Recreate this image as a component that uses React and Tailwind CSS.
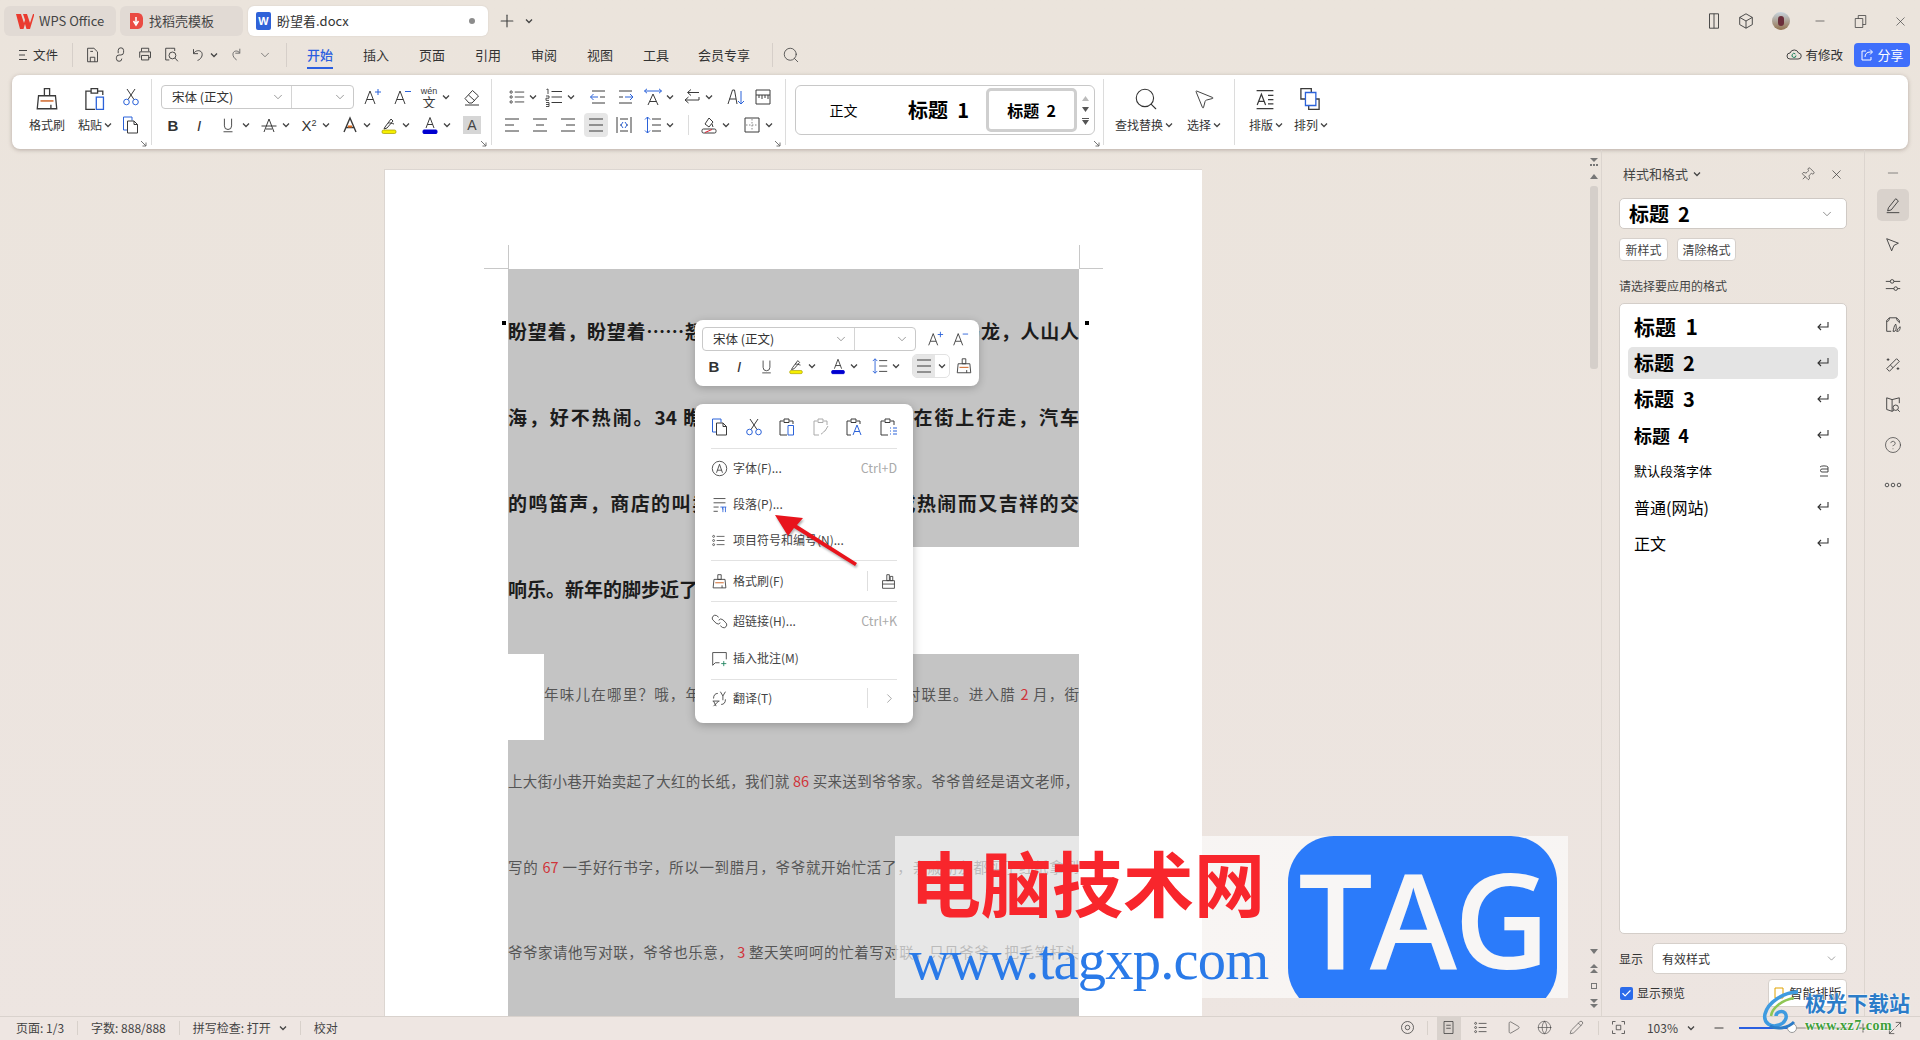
import React from "react";
import { Search, Pin, X, CircleHelp, Globe, Play, Pencil, MousePointer2, Minus, Plus, ChevronDown, ChevronRight, Check } from "lucide-react";

const BL = "#2b62d9";
const DK = "#3a3a3a";

function Ic({ s = 20, children, vb = 20, className = "" }) {
  return (
    <svg width={s} height={s} viewBox={`0 0 ${vb} ${vb}`} fill="none" stroke={DK} strokeWidth="1" className={"shrink-0 " + className}>
      {children}
    </svg>
  );
}
const Chev = () => (
  <svg width="8" height="6" viewBox="0 0 8 6" fill="none" stroke="#444" strokeWidth="1.3" className="shrink-0"><path d="M1 1.5 4 4.5 7 1.5" /></svg>
);
const Launcher = () => (
  <svg width="7" height="7" viewBox="0 0 7 7" fill="none" stroke="#666" strokeWidth="0.9"><path d="M1 1 6 6M6 2.5V6H2.5" /></svg>
);
function T({ w, children, chev, gap = "gap-[3px]" }) {
  return <div className={`${w} h-full flex items-center justify-center ${gap} shrink-0`}>{children}{chev && <Chev />}</div>;
}

const Brush = ({ s = 20 }) => (
  <Ic s={s}><path d="M8 2h4v5.5H8zM3.5 7.5h13l1 10h-15zM13 17.5v-3" /><path d="M5 11.5h10" stroke="#c8500a" /></Ic>
);
const Paste = ({ s = 20 }) => (
  <Ic s={s}><path d="M6.5 4H3v14h7M7 2h5v3.5H7zM12.5 4H16v3" /><path d="M11 8.5h5.5V18H11z" stroke={BL} /></Ic>
);
const Cut = ({ s = 20 }) => (
  <Ic s={s}><path d="M7 12.5 14 2M13 12.5 6 2" /><circle cx="5.5" cy="15" r="2.8" stroke={BL} /><circle cx="14.5" cy="15" r="2.8" stroke={BL} /></Ic>
);
const Copy = ({ s = 20 }) => (
  <Ic s={s}><path d="M6 15H2.5V2H11v3.5" stroke={BL} /><path d="M6.5 6H13l3.5 3.5V18h-10zM13 6v3.5h3.5" /></Ic>
);
const AGlyph = <path d="M3 17 8 4l5 13M4.8 12.5h6.4" />;
const AUp = ({ s = 20 }) => <Ic s={s}>{AGlyph}<path d="M16 2v6M13 5h6" stroke={BL} /></Ic>;
const ADown = ({ s = 20 }) => <Ic s={s}>{AGlyph}<path d="M13 4.5h6" stroke={BL} /></Ic>;
const Wen = () => (
  <svg width="20" height="22" viewBox="0 0 20 22" className="shrink-0"><text x="10" y="8" textAnchor="middle" fontSize="9" fill={DK} fontFamily="'Liberation Sans'">wén</text><text x="10" y="20.5" textAnchor="middle" fontSize="13" fill={DK} fontFamily="'Noto Sans CJK SC'">文</text></svg>
);
const Eraser = () => (
  <Ic><path d="M3 11.5 10.5 3.5l6 5.5-6.5 7H7zM6.5 8 13 14" /><path d="M3 18h14" /></Ic>
);
const Letter = ({ c, cls = "" }) => <span className={`text-[15px] leading-none text-[#333] font-['Liberation_Sans'] ${cls}`}>{c}</span>;
const Under = ({ s = 20 }) => <Ic s={s}><path d="M6 3v8a4 4 0 0 0 8 0V3M5 17.5h10" /></Ic>;
const Strike = () => <Ic><path d="M5 17 10 4l5 13M2.5 11h15M7 14h6" /></Ic>;
const Sup = () => <span className="text-[15px] leading-none text-[#333] font-['Liberation_Sans']">X<sup className="text-[9px]">2</sup></span>;
const AGlow = () => <Ic><path d="M4 17 10 3l6 14M6 12.5h8" strokeWidth="1.4" /><path d="M8 11.5h4" stroke="#e06a1a" strokeWidth="2" /></Ic>;
const Hi = ({ s = 20 }) => (
  <Ic s={s}><path d="M6 12 12 4l2 2-6 7-3 1z" /><path d="M9 8c2-.5 4 .5 6 1" /><rect x="3" y="15" width="14" height="3.5" rx="1.5" fill="#f6ef00" stroke="#a59a00" strokeWidth="0.7" /></Ic>
);
const ColorA = ({ s = 20 }) => (
  <Ic s={s}><path d="M6 13 10 2.5 14 13M7.2 9.5h5.6" /><rect x="3" y="15" width="14" height="3.5" rx="1" fill="#0000d0" stroke="#0000d0" /></Ic>
);
const Lines = ({ d }) => <path d={d} />;
const Bullets = ({ s = 20 }) => (
  <Ic s={s}><circle cx="3.5" cy="4.5" r="1.3" /><circle cx="3.5" cy="10" r="1.3" /><circle cx="3.5" cy="15.5" r="1.3" /><Lines d="M7.5 4.5H18M7.5 10H18M7.5 15.5H18" /></Ic>
);
const Numbers = () => (
  <Ic><path d="M2.5 2.5 4 2v5M2 9h3v2.2H2v2.2h3M2 15.5h3v4H2M2 17.5h3" strokeWidth="0.9" /><Lines d="M7.5 4.5H18M7.5 10H18M7.5 15.5H18" /></Ic>
);
const Dedent = () => <Ic><Lines d="M4 4h13M12 10h5M4 16h13" /><path d="M10 10H2.5M5.5 7l-3 3 3 3" stroke={BL} /></Ic>;
const Indent = () => <Ic><Lines d="M3 4h13M3 10h4M3 16h13" /><path d="M9 10h8M14 7l3 3-3 3" stroke={BL} /></Ic>;
const Dir = () => <Ic><path d="M5 18 10 7l5 11M6.8 14.5h6.4" /><path d="M1.5 4h17M4 1.8 1.5 4 4 6.2M16 1.8 18.5 4 16 6.2" stroke={BL} /></Ic>;
const Swap = () => <Ic><path d="M17 5.5H6M9 2.5 5.5 5.5 9 8.5M3 13h14v-3M3 13l3.5 3M3 13l3.5-3" /></Ic>;
const Sort = () => <Ic><path d="M2 17 6.5 3h2L11 17M3.5 12h6.5" /><path d="M15 4v13M12 14l3 3 3-3" stroke={BL} /></Ic>;
const Ruler = () => <Ic><path d="M3 3h14M3 17h14M3 3v14M17 3v14M3 8h14M6 8v3M9 8v4M12 8v3M15 8v4" /></Ic>;
const Al = ({ d }) => <Ic><path d={d} /></Ic>;
const LineSp = ({ s = 20 }) => (
  <Ic s={s}><Lines d="M9 4h9M9 10h9M9 16h9" /><path d="M4.5 2v16M2 4.5 4.5 2 7 4.5M2 15.5 4.5 18 7 15.5" stroke={BL} /></Ic>
);
const Distrib = () => <Ic><path d="M3 2v16M17 2v16M6 4h8M6 16h8M6 10h1.5M12.5 10H14" /><path d="M9 7 7 10l2 3M11 7l2 3-2 3" stroke={BL} /></Ic>;
const Shade = () => <Ic><path d="M6 9 10 3l4 4-4 5zM13 9l1 3" /><rect x="3" y="14" width="14" height="4" rx="1.5" /><path d="M6 17.5 13 14.5" stroke="#d23" /></Ic>;
const Border = () => <Ic><path d="M3 3h14v14H3z" /><path d="M10 4v12M4 10h12" strokeDasharray="1.5 1.5" stroke="#888" /></Ic>;
const Save = () => <Ic s={18}><path d="M4 2.5h7l4 4v11H4zM7 17.5v-5h5v5M7 6h3" /></Ic>;
const Link2 = () => <Ic s={18}><path d="M8 8V5a3 3 0 0 1 6 0v2a3 3 0 0 1-3 3H9a3 3 0 0 0-3 3v1a3 3 0 0 0 6 0" /></Ic>;
const Printer = () => <Ic s={18}><path d="M5 6V2.5h8V6M3 13V6.5h12V13h-2M5 10.5h8v5H5z" /></Ic>;
const Preview = () => <Ic s={18}><path d="M8 2.5H3v13h4M8 2.5h5v3" /><circle cx="10.5" cy="10.5" r="3.8" /><path d="m13.5 13.5 3 3.5" /></Ic>;
const Undo = () => <Ic s={18}><path d="M5 3.5v5h5M5.2 8.2C7 5 12 4 14 7c2 3.5-1 8-4.5 9" /></Ic>;
const Redo = () => <Ic s={18}><path d="M12 3v5H7" stroke="#666" /><path d="M12 8C10 4.500 5.500 5 4.500 8c-.8 3 1.500 6 4 7.500" stroke="#666" /></Ic>;

function Label({ children, chev }) {
  return <div className="h-full flex items-center justify-center gap-[2px] text-[12px] text-[#333] whitespace-nowrap">{children}{chev && <Chev />}</div>;
}
function Combo({ name, className, split }) {
  return (
    <div className={`flex border border-[#c9c9c9] rounded-[4px] bg-white h-[24px] shrink-0 ${className}`}>
      <div className={`${split} flex items-center justify-between pl-[10px] pr-[6px] border-r border-[#d4d4d4] text-[12.5px] text-[#333]`}>
        <span>{name}</span><ChevronDown size={14} strokeWidth={1} color="#555" />
      </div>
      <div className="flex-1 flex items-center justify-end pr-[6px]"><ChevronDown size={14} strokeWidth={1} color="#555" /></div>
    </div>
  );
}
function Sep() { return <div className="w-px self-stretch my-[0px] bg-[#dcdcdc] shrink-0" />; }

function BigCol({ w, icon, label, iconCls = "" }) {
  return (
    <div className={`${w} flex flex-col shrink-0`}>
      <div className={`h-[28px] mt-[6px] flex items-center justify-center ${iconCls}`}>{icon}</div>
      <div className="h-[24px]"><Label chev={label.chev}>{label.t}</Label></div>
    </div>
  );
}

function Ribbon() {
  return (
    <div className="mx-[12px] h-[74px] bg-white rounded-[8px] shadow-[0_1px_4px_rgba(90,70,60,0.35)] flex pt-[4px] pb-[4px] shrink-0">
      {/* clipboard */}
      <div className="w-[139px] relative flex pl-[12px] shrink-0">
        <BigCol w="w-[46px]" icon={<Brush s={26} />} label={{ t: "格式刷" }} />
        <BigCol w="w-[50px]" icon={<Paste s={26} />} label={{ t: "粘贴", chev: true }} />
        <div className="w-[22px] flex flex-col pt-[6px]">
          <div className="h-[24px] flex items-center justify-center"><Cut /></div>
          <div className="h-[24px] mt-[4px] flex items-center justify-center"><Copy /></div>
        </div>
        <div className="absolute right-[4px] bottom-[-2px]"><Launcher /></div>
      </div>
      <Sep />
      {/* font */}
      <div className="w-[339px] relative pt-[6px] pl-[9px] shrink-0">
        <div className="h-[24px] flex">
          <Combo name="宋体 (正文)" className="w-[193px]" split="w-[130px]" />
          <T w="w-[33px] ml-[1px]"><AUp /></T>
          <T w="w-[27px]"><ADown /></T>
          <T w="w-[39px]" chev><Wen /></T>
          <T w="w-[35px]"><Eraser /></T>
        </div>
        <div className="h-[24px] mt-[4px] flex">
          <T w="w-[24px]"><Letter c="B" cls="font-bold" /></T>
          <T w="w-[28px]"><Letter c="I" cls="italic" /></T>
          <T w="w-[42px]" chev gap="gap-[5px]"><Under s={18} /></T>
          <T w="w-[39px]" chev><Strike /></T>
          <T w="w-[43px]" chev gap="gap-[5px]"><Sup /></T>
          <T w="w-[37px]" chev><AGlow /></T>
          <T w="w-[41px]" chev><Hi /></T>
          <T w="w-[40px]" chev><ColorA /></T>
          <div className="ml-[8px] w-[18px] h-[18px] mt-[3px] bg-[#d6d6d6] flex items-center justify-center text-[14px] text-[#444] font-['Liberation_Sans']">A</div>
        </div>
        <div className="absolute right-[4px] bottom-[-2px]"><Launcher /></div>
      </div>
      <Sep />
      {/* paragraph */}
      <div className="w-[293px] relative pt-[6px] shrink-0">
        <div className="h-[24px] flex pl-[12px]">
          <T w="w-[37px]" chev><Bullets s={18} /></T>
          <T w="w-[37px]" chev><Numbers /></T>
          <T w="w-[28px] ml-[6px]"><Dedent /></T>
          <T w="w-[28px]"><Indent /></T>
          <T w="w-[37px]" chev><Dir /></T>
          <T w="w-[40px]" chev><Swap /></T>
          <T w="w-[27px] ml-[5px]"><Sort /></T>
          <T w="w-[27px]"><Ruler /></T>
        </div>
        <div className="h-[24px] mt-[4px] flex pl-[6px]">
          <T w="w-[28px]"><Al d="M3 4h14M3 10h9M3 16h14" /></T>
          <T w="w-[28px]"><Al d="M3 4h14M6 10h8M3 16h14" /></T>
          <T w="w-[28px]"><Al d="M3 4h14M8 10h9M3 16h14" /></T>
          <T w="w-[28px]"><div className="w-[24px] h-[24px] rounded-[4px] bg-[#e6e6e6] flex items-center justify-center"><Al d="M3 4h14M3 10h14M3 16h14" /></div></T>
          <T w="w-[28px]"><Distrib /></T>
          <T w="w-[40px]" chev><LineSp /></T>
          <div className="w-px h-[20px] mt-[2px] ml-[10px] bg-[#dcdcdc]" />
          <T w="w-[43px] ml-[4px]" chev><Shade /></T>
          <T w="w-[42px]" chev><Border /></T>
        </div>
        <div className="absolute right-[4px] bottom-[-2px]"><Launcher /></div>
      </div>
      <Sep />
      {/* styles */}
      <div className="w-[317px] relative pl-[9px] pt-[6px] shrink-0">
        <div className="w-[300px] h-[50px] border border-[#c8c8c8] rounded-[6px] flex items-center text-black">
          <div className="w-[95px] text-center text-[14px]">正文</div>
          <div className="w-[95px] text-center text-[20px] font-bold whitespace-pre">标题  1</div>
          <div className="w-[91px] h-[44px] border-[3px] border-[#cfcfcf] rounded-[5px] flex items-center justify-center text-[16px] font-bold whitespace-pre">标题  2</div>
          <div className="flex-1 flex flex-col items-center gap-[6px] text-[#777]">
            <svg width="7" height="5" viewBox="0 0 7 5" fill="#bbb"><path d="M3.5 0 7 5H0z" /></svg>
            <svg width="7" height="5" viewBox="0 0 7 5" fill="#555"><path d="M0 0h7L3.5 5z" /></svg>
            <svg width="7" height="7" viewBox="0 0 7 7" fill="#555"><path d="M0 0h7v1H0zM0 2h7L3.5 7z" /></svg>
          </div>
        </div>
        <div className="absolute right-[3px] bottom-[-2px]"><Launcher /></div>
      </div>
      <Sep />
      {/* find */}
      <div className="w-[130px] flex shrink-0">
        <BigCol w="w-[80px]" iconCls="pl-[4px]" icon={<Search size={26} strokeWidth={1} color="#333" />} label={{ t: "查找替换", chev: true }} />
        <BigCol w="w-[40px]" icon={<MousePointer2 size={24} strokeWidth={1} color="#444" />} label={{ t: "选择", chev: true }} />
      </div>
      <Sep />
      <div className="flex pl-[9px]">
        <BigCol w="w-[44px]" iconCls="pr-[2px]" icon={<Ic s={24}><path d="M3 3h14M3 18h14" /><path d="M3.5 15 7 6l3.500 9M4.800 12h4.500M12.500 7H17M12.500 10.500H17M12.500 14H17" /></Ic>} label={{ t: "排版", chev: true }} />
        <BigCol w="w-[46px]" iconCls="pr-[2px]" icon={<Ic s={26}><path d="M3 2h8v8H3zM9 10h8v8H9z" /><path d="M6.500 5h8v10h-8z" fill="#fff" stroke={BL} /></Ic>} label={{ t: "排列", chev: true }} />
      </div>
    </div>
  );
}

function TabBar() {
  return (
    <div className="h-[36px] pt-[6px] pl-[4px] flex items-stretch shrink-0">
      <div className="w-[112px] bg-[#e1dad4] rounded-[6px] flex items-center pl-[12px] gap-[5px] text-[13px] text-[#444]">
        <svg width="18" height="15" viewBox="0 0 18 15"><path d="M0 0h5l3 9 1-3-2-6h4l3 9 3-9h1.500l-4.500 15h-3.500L9 10l-1.500 5H4z" fill="#ea3b2f" /></svg>
        <span>WPS Office</span>
      </div>
      <div className="w-[123px] ml-[4px] bg-[#e1dad4] rounded-[6px] flex items-center pl-[9px] gap-[5px] text-[13px] text-[#444]">
        <svg width="15" height="18" viewBox="0 0 15 18"><path d="M1 1h8a6 6 0 0 1 5 5v6a6 6 0 0 1-5 5H1z" fill="#ea4b43" /><path d="M7 5v6M4.500 9 7 13l2.500-4" stroke="#fff" strokeWidth="1.500" fill="none" /></svg>
        <span>找稻壳模板</span>
      </div>
      <div className="w-[240px] ml-[5px] bg-white rounded-[6px] flex items-center pl-[8px] pr-[13px] gap-[6px] text-[13px] text-[#333] shadow-[0_0_2px_rgba(0,0,0,0.1)]">
        <div className="w-[15px] h-[18px] rounded-[2px] bg-[#2f62d8] text-white text-[11px] font-bold flex items-center justify-center font-['Liberation_Sans']">W</div>
        <span className="flex-1">盼望着.docx</span>
        <div className="w-[6px] h-[6px] rounded-full bg-[#8c8c8c]" />
      </div>
      <div className="ml-[9px] flex items-center gap-[8px]">
        <Plus size={20} strokeWidth={1.4} color="#444" /><Chev />
      </div>
      <div className="ml-auto flex items-center">
        <div className="w-[30px] flex justify-center pr-[2px]"><Ic s={18}><path d="M5 2h10v16H5zM10 2v16" /></Ic></div>
        <div className="w-[32px] flex justify-center"><Ic s={18}><path d="M10 2 17 6v8l-7 4-7-4V6zM3 6l7 4 7-4M10 10v8" /></Ic></div>
        <div className="w-[38px] flex justify-center"><div className="w-[18px] h-[18px] rounded-full bg-gradient-to-b from-[#c7d4de] to-[#93734f] flex items-center justify-center"><div className="w-[6px] h-[10px] rounded-full bg-[#6b2e3a]" /></div></div>
        <div className="w-[40px] flex justify-center"><Minus size={14} strokeWidth={1.2} color="#444" /></div>
        <div className="w-[40px] flex justify-center"><Ic s={15}><path d="M3 6h10v12H3zM7 6V2h10v12h-4" /></Ic></div>
        <div className="w-[40px] flex justify-center"><X size={15} strokeWidth={1.1} color="#444" /></div>
      </div>
    </div>
  );
}

function MenuBar() {
  const tabs = [["插入", "w-[56px]"], ["页面", "w-[56px]"], ["引用", "w-[56px]"], ["审阅", "w-[56px]"], ["视图", "w-[56px]"], ["工具", "w-[56px]"]];
  return (
    <div className="h-[39px] flex items-center text-[13px] text-[#333] shrink-0 pb-[1px]">
      <div className="w-[72px] flex items-center pl-[18px] gap-[5px] text-[12.5px]">
        <svg width="10" height="12" viewBox="0 0 10 12" stroke="#444" fill="none"><path d="M1 1.500h8M1 6h6M1 10.500h8" /></svg>
        <span>文件</span>
      </div>
      <div className="w-px h-[24px] bg-[#d6cfc9]" />
      <div className="flex items-center w-[213px] h-full">
        <T w="w-[28px] ml-[6px]"><Save /></T>
        <T w="w-[26px]"><Link2 /></T>
        <T w="w-[25px]"><Printer /></T>
        <T w="w-[27px]"><Preview /></T>
        <T w="w-[37px]" chev><Undo /></T>
        <T w="w-[32px]"><Redo /></T>
        <T w="w-[22px]"><ChevronDown size={14} strokeWidth={1.2} color="#555" /></T>
      </div>
      <div className="w-px h-[24px] bg-[#d6cfc9]" />
      <div className="w-[20px]" />
      <div className="w-[26px] h-full relative flex items-center justify-center text-[#2b5fe0] font-medium whitespace-nowrap">
        开始
        <div className="absolute bottom-[5px] left-0 right-0 h-[2px] bg-[#2b5fe0]" />
      </div>
      <div className="w-[15px]" />
      {tabs.map(([t, w]) => <div key={t} className={`${w} text-center`}>{t}</div>)}
      <div className="w-[80px] text-center whitespace-nowrap">会员专享</div>
      <div className="w-[8px]" />
      <div className="w-px h-[24px] bg-[#d6cfc9]" />
      <div className="w-[36px] flex justify-center"><Search size={18} strokeWidth={1.1} color="#444" /></div>
      <div className="ml-auto flex items-center mr-[10px]">
        <svg width="16" height="16" viewBox="0 0 16 16" fill="none" stroke="#444" strokeWidth="1"><path d="M4 12a3 3 0 0 1 0-6 4.500 4.500 0 0 1 8.500 0A3 3 0 0 1 12 12z" /><path d="M10 8.500a2 2 0 1 1-.6-1.500" stroke="#17805a" /></svg>
        <span className="ml-[3px] text-[12.500px]">有修改</span>
        <div className="ml-[11px] w-[56px] h-[24px] bg-[#3f6ffb] rounded-[4px] flex items-center justify-center gap-[3px] text-white text-[13px]">
          <svg width="14" height="14" viewBox="0 0 14 14" fill="none" stroke="#fff" strokeWidth="1"><path d="M6 3H2v9h9V9M5 9c0-3 2-5 5-5h2M10 1.500 12.500 4 10 6.500" /></svg>
          分享
        </div>
      </div>
    </div>
  );
}

const Red = ({ children }) => <span className="text-[#d0343a]"> {children} </span>;

function Doc() {
  const h = "font-bold text-[19px] text-[#1c1c1c] whitespace-nowrap pb-[2px]";
  const j = "text-justify [text-align-last:justify]";
  const b = "text-[14.500px] text-[#555] pb-[4px]";
  return (
    <div className="flex-1 relative overflow-hidden min-w-0">
      <div className="ml-[384px] mt-[19px] w-[818px] h-[900px] bg-white border-l border-t border-[#dcd6d1] relative pt-[99px] pl-[123px]">
        <div className="absolute left-[99px] top-[98px] w-[24px] h-px bg-[#c8c8c8]" />
        <div className="absolute left-[694px] top-[98px] w-[24px] h-px bg-[#c8c8c8]" />
        <div className="absolute left-[123px] top-[75px] w-px h-[24px] bg-[#c8c8c8]" />
        <div className="absolute left-[694px] top-[75px] w-px h-[24px] bg-[#c8c8c8]" />
        <div className="absolute left-[117px] top-[151px] w-[4px] h-[4px] bg-black" />
        <div className="absolute left-[700px] top-[151px] w-[4px] h-[4px] bg-black" />
        <div className="w-[571px] bg-[#c4c4c4] pt-[20px]">
          <div className={`h-[86px] flex items-center ${h}`}><div className={`w-full ${j}`}>盼望着，盼望着……翘首以盼的新年到了，街上车水马龙，人山人</div></div>
          <div className={`h-[86px] flex items-center ${h}`}><div className={`w-full ${j}`}>海，好不热闹。34 瞧，街上到处都是人，人在街上行走，汽车</div></div>
          <div className={`h-[86px] flex items-center ${h}`}><div className={`w-full ${j}`}>的鸣笛声，商店的叫卖声，交织在一起，汇成热闹而又吉祥的交</div></div>
        </div>
        <div className="w-[260px] h-[107px] bg-[#c4c4c4]">
          <div className={`h-[86px] flex items-center ${h}`}>响乐。新年的脚步近了！</div>
        </div>
        <div className="w-[571px] h-[86px] flex">
          <div className="w-[36px] bg-white shrink-0" />
          <div className={`flex-1 bg-[#c4c4c4] pb-[6px] flex items-center text-[14.500px] text-[#555] whitespace-nowrap`}><div className={`w-full ${j}`}>年味儿在哪里？哦，年味儿就藏在那家家户户红红的对联里。进入腊<Red>2</Red>月，街</div></div>
        </div>
        <div className="w-[571px] bg-[#c4c4c4] pb-[200px]">
          <div className={`h-[86px] flex items-center ${b} whitespace-nowrap`}><div className={`w-full ${j}`}>上大街小巷开始卖起了大红的长纸，我们就<Red>86</Red>买来送到爷爷家。爷爷曾经是语文老师，</div></div>
          <div className={`h-[86px] flex items-center ${b} whitespace-nowrap`}><div className={`w-full ${j}`}>写的<Red>67</Red>一手好行书字，所以一到腊月，爷爷就开始忙活了，亲戚朋友都买了红纸拿到</div></div>
          <div className={`h-[84px] flex items-center ${b} whitespace-nowrap`}><div className={`w-full ${j}`}>爷爷家请他写对联，爷爷也乐意，<Red>3</Red>整天笑呵呵的忙着写对联，只见爷爷，把毛笔杆头</div></div>
        </div>
      </div>
    </div>
  );
}

function ScrollCol() {
  const Tri = ({ up, c = "#777" }) => <svg width="8" height="5" viewBox="0 0 8 5" fill={c}><path d={up ? "M4 0 8 5H0z" : "M0 0h8L4 5z"} /></svg>;
  return (
    <div className="w-[12px] border-r border-[#dcd5cf] flex flex-col items-center pt-[8px] pb-[8px] shrink-0 pr-[3px]">
      <svg width="8" height="8" viewBox="0 0 8 8" fill="#777"><path d="M0 0h8L4 4zM0 6h2v2H0zM3 6h2v2H3zM6 6h2v2H6z" /></svg>
      <div className="mt-[8px]"><Tri up /></div>
      <div className="mt-[7px] w-[8px] h-[183px] rounded-[3px] bg-[#d5cfca]" />
      <div className="mt-auto flex flex-col items-center gap-[10px]">
        <Tri /><svg width="8" height="9" viewBox="0 0 8 9" fill="#777"><path d="M4 0 8 4H0zM4 5 8 9H0z" /></svg>
        <div className="w-[6px] h-[6px] border border-[#777]" />
        <svg width="8" height="9" viewBox="0 0 8 9" fill="#777"><path d="M0 0h8L4 4zM0 5h8L4 9z" /></svg>
      </div>
    </div>
  );
}

const Ret = ({ s }) => (
  <svg width="12" height="10" viewBox="0 0 12 10" fill="none" stroke="#333" strokeWidth="1.100" className="shrink-0"><path d="M11 0v5H1M4 2 1 5l3 3" /></svg>
);
function StyleRow({ cls, t, active, icon }) {
  return (
    <div className="h-[36px] flex items-center py-[2px]">
      <div className={`flex-1 h-[32px] rounded-[5px] flex items-center justify-between pl-[6px] pr-[9px] ${active ? "bg-[#e4e4e4]" : ""}`}>
        <span className={`text-black whitespace-pre ${cls}`}>{t}</span>
        {icon || <Ret />}
      </div>
    </div>
  );
}

function Panel() {
  return (
    <div className="w-[262px] flex flex-col px-[17px] shrink-0 relative">
      <div className="h-[48px] flex items-center pl-[4px] pr-[3px] text-[13px] text-[#444]">
        <span>样式和格式</span>
        <span className="ml-[5px]"><Chev /></span>
        <div className="ml-auto flex items-center gap-[14px]">
          <Pin size={15} strokeWidth={1} color="#333" className="rotate-45" />
          <X size={15} strokeWidth={1.1} color="#333" />
        </div>
      </div>
      <div className="h-[31px] bg-white border border-[#cfc9c4] rounded-[5px] flex items-center justify-between pl-[9px] pr-[12px]">
        <span className="text-[20px] font-bold text-black whitespace-pre">标题  2</span>
        <ChevronDown size={14} strokeWidth={1.1} color="#555" />
      </div>
      <div className="flex gap-[9px] mt-[9px] text-[12px] text-[#444]">
        <div className="w-[49px] h-[23px] bg-white border border-[#d6d0cb] rounded-[4px] flex items-center justify-center">新样式</div>
        <div className="w-[59px] h-[23px] bg-white border border-[#d6d0cb] rounded-[4px] flex items-center justify-center">清除格式</div>
      </div>
      <div className="h-[42px] flex items-center text-[12px] text-[#444] pt-[12px] pb-[4px]">请选择要应用的格式</div>
      <div className="h-[631px] bg-white border border-[#d4cec9] rounded-[5px] pt-[5px] px-[8px] shrink-0">
        <StyleRow cls="text-[21px] font-bold" t="标题  1" />
        <StyleRow cls="text-[20px] font-bold" t="标题  2" active />
        <StyleRow cls="text-[20px] font-bold" t="标题  3" />
        <StyleRow cls="text-[18px] font-bold" t="标题  4" />
        <StyleRow cls="text-[13px]" t="默认段落字体" icon={
          <svg width="10" height="13" viewBox="0 0 10 13" fill="none" stroke="#333" strokeWidth="0.900"><path d="M1 2c1-1.500 7-1.500 8 0v5H3a1.500 1.500 0 0 1 0-3h6M1 11h8" /></svg>
        } />
        <StyleRow cls="text-[16px]" t="普通(网站)" />
        <StyleRow cls="text-[16px]" t="正文" />
      </div>
      <div className="mt-[9px] h-[31px] flex items-center gap-[9px] text-[12px] text-[#333] shrink-0">
        <span>显示</span>
        <div className="flex-1 h-[31px] bg-white border border-[#d6d0cb] rounded-[5px] flex items-center justify-between pl-[9px] pr-[8px]">
          <span>有效样式</span><ChevronDown size={13} strokeWidth={1} color="#555" />
        </div>
      </div>
      <div className="mt-[4px] h-[30px] flex items-center text-[12px] text-[#333] shrink-0">
        <div className="w-[13px] h-[13px] ml-[1px] rounded-[2px] bg-[#2b6bea] flex items-center justify-center"><Check size={11} strokeWidth={2.500} color="#fff" /></div>
        <span className="ml-[4px]">显示预览</span>
        <div className="ml-auto w-[79px] h-[28px] bg-white border border-[#d6d0cb] rounded-[4px] flex items-center justify-center gap-[2px] text-[13px]">
          <svg width="14" height="14" viewBox="0 0 14 14" fill="#fff" stroke="#e0a200"><path d="M2 2h8v10H2z" /></svg>
          智能排版
        </div>
      </div>
    </div>
  );
}

function SideBar() {
  const Cell = ({ children, active, cls = "my-[4px]" }) => (
    <div className={`w-[32px] h-[32px] rounded-[5px] flex items-center justify-center ${cls} ${active ? "bg-[#d9d2cc]" : ""}`}>{children}</div>
  );
  return (
    <div className="w-[56px] shrink-0 border-l border-[#dcd5cf] flex flex-col items-center pt-[4px]">
      <Cell cls="mt-[3px] mb-[-4px]"><Minus size={16} strokeWidth={1} color="#555" /></Cell>
      <Cell active><Ic s={18}><path d="M5 13 13 3l3 2.500-8 10-4 1zM3 18.500h14" /></Ic></Cell>
      <Cell><Ic s={18}><path d="M3 3l13 5-5 2.500-2.500 6z" /></Ic></Cell>
      <Cell><Ic s={18}><path d="M2 6h5M11 6h7M2 14h9M15 14h3" /><circle cx="9" cy="6" r="2" /><circle cx="13" cy="14" r="2" /></Ic></Cell>
      <Cell><Ic s={18}><path d="M8 17H3V5l3-3h8l3 3v3M6 2c0 3-1 4-3 4M14 2c0 3 1 4 3 4" /><path d="M10 17c1-3 1-6 3-8 1 3 1 6-1 8zM14 17c1-2 2-4 4-5 0 3-1 4-2 5z" /></Ic></Cell>
      <Cell><Ic s={18}><path d="M3 14 14 3l3 3L6 17zM7 10l3 3" /><path d="M3 4l3 0M4.500 2.500v3M14 14h3M15.500 12.500v3" /></Ic></Cell>
      <Cell><Ic s={18}><path d="M9 4 3 2v13l6 2 2-1M9 4l8-2v6M9 4v13" /><circle cx="13" cy="13" r="3" /><path d="m15.200 15.200 2.300 2.300" /></Ic></Cell>
      <Cell><CircleHelp size={18} strokeWidth={1} color="#444" /></Cell>
      <Cell>
        <svg width="18" height="6" viewBox="0 0 18 6" fill="none" stroke="#555"><circle cx="3" cy="3" r="1.800" /><circle cx="9" cy="3" r="1.800" /><circle cx="15" cy="3" r="1.800" /></svg>
      </Cell>
    </div>
  );
}

function StatusBar() {
  const S = () => <div className="w-px h-[14px] bg-[#d8d1cb] mx-[13px]" />;
  return (
    <div className="h-[24px] border-t border-[#d9d2cd] bg-[#eee6e2] flex items-center text-[12px] text-[#444] pl-[16px] pb-[2px] shrink-0">
      <span>页面: 1/3</span><S /><span>字数: 888/888</span><S /><span>拼写检查: 打开</span><span className="ml-[8px]"><Chev /></span><S /><span>校对</span>
      <div className="ml-auto flex items-center h-full">
        <T w="w-[20px]"><Ic s={15}><circle cx="10" cy="10" r="8" /><circle cx="10" cy="10" r="3" /></Ic></T>
        <div className="w-px h-[14px] bg-[#d8d1cb] mx-[9px]" />
        <div className="w-[24px] h-[23px] mb-[-2px] bg-[#d9d2cd] flex items-center justify-center pb-[2px]"><Ic s={15}><path d="M4 2h12v16H4zM7 7h6M7 11h6" /></Ic></div>
        <T w="w-[40px]"><Bullets s={15} /></T>
        <T w="w-[26px]"><Play size={15} strokeWidth={1} color="#444" /></T>
        <T w="w-[36px]"><Globe size={15} strokeWidth={1} color="#444" /></T>
        <T w="w-[28px]"><Pencil size={15} strokeWidth={1} color="#444" /></T>
        <div className="w-px h-[14px] bg-[#d8d1cb] ml-[7px] mr-[9px]" />
        <T w="w-[22px]"><Ic s={15}><path d="M2 6V2h4M14 2h4v4M18 14v4h-4M6 18H2v-4M7 7h6v6H7z" /></Ic></T>
        <span className="ml-[17px]">103%</span>
        <span className="ml-[9px]"><Chev /></span>
        <div className="ml-[17px]"><Minus size={14} strokeWidth={1.600} color="#333" /></div>
        <div className="ml-[13px] w-[110px] h-[2px] bg-[#bdb7b2] relative">
          <div className="w-[54px] h-[2px] bg-[#2a5fe0]" />
          <div className="absolute left-[48px] top-[-4px] w-[10px] h-[10px] rounded-full bg-white border border-[#999]" />
        </div>
        <div className="ml-[7px]"><Plus size={14} strokeWidth={1.300} color="#333" /></div>
        <T w="w-[50px]"><Ic s={14}><path d="M11 2h7v7M2 11v7h7M18 2 11 9M2 18l7-7" /></Ic></T>
      </div>
    </div>
  );
}

function FloatBar() {
  const Tx = ({ c, cls }) => <span className={`text-[15px] leading-none text-[#333] font-['Liberation_Sans'] ${cls}`}>{c}</span>;
  return (
    <div className="absolute left-[695px] top-[320px] w-[284px] h-[66px] bg-white rounded-[8px] shadow-[0_2px_8px_rgba(0,0,0,0.22)] pl-[7px] pt-[7px] z-10">
      <div className="flex h-[24px]">
        <Combo name="宋体 (正文)" className="w-[214px]" split="w-[152px]" />
        <T w="w-[24px] ml-[7px]"><AUp s={18} /></T>
        <T w="w-[26px]"><ADown s={18} /></T>
      </div>
      <div className="flex h-[24px] mt-[3px]">
        <T w="w-[24px]"><Tx c="B" cls="font-bold" /></T>
        <T w="w-[26px]"><Tx c="I" cls="italic" /></T>
        <T w="w-[28px]"><Under s={17} /></T>
        <T w="w-[42px]" chev><Hi s={18} /></T>
        <T w="w-[42px]" chev><ColorA s={18} /></T>
        <T w="w-[42px]" chev><LineSp s={18} /></T>
        <div className="ml-[6px] w-[38px] h-[24px] border border-[#e2e2e2] rounded-[5px] flex overflow-hidden">
          <div className="w-[22px] bg-[#e6e6e6] flex items-center justify-center"><Al d="M3 4h14M3 10h14M3 16h14" /></div>
          <div className="flex-1 flex items-center justify-center"><Chev /></div>
        </div>
        <T w="w-[28px]"><Brush s={18} /></T>
      </div>
    </div>
  );
}

function MRow({ icon, t, key2, cls = "", vsep }) {
  return (
    <div className={`h-[36px] flex items-center text-[12px] text-[#444] ${cls}`}>
      <div className="w-[22px] flex justify-start">{icon}</div>
      <span className="flex-1 whitespace-nowrap">{t}</span>
      {key2 && <span className="text-[#aaa] text-[12.500px]">{key2}</span>}
      {vsep && <><div className="w-px h-[20px] bg-[#dedede]" /><div className="w-[29px] flex justify-end">{vsep}</div></>}
    </div>
  );
}
const Hr = () => <div className="h-px bg-[#e2e2e2]" />;

function ContextMenu() {
  return (
    <div className="absolute left-[695px] top-[404px] w-[218px] h-[319px] bg-white rounded-[8px] shadow-[0_2px_10px_rgba(0,0,0,0.25)] px-[16px] z-10">
      <div className="h-[44px] flex items-center justify-between pt-[2px] -mx-[1px]">
        <Copy s={20} /><Cut s={20} /><Paste s={20} />
        <Ic s={20}><g stroke="#aaa"><path d="M6.500 4H3v14h5M7 2h5v3.500H7zM12.500 4H16v4" /><path d="M10 17c2 0 2-3 4-3l3-5" /></g></Ic>
        <Ic s={20}><path d="M6.500 4H3v14h4M7 2h5v3.500H7zM12.500 4H16v3" /><path d="M9 18 13 8l4 10M10.500 14.500h5" stroke={BL} /></Ic>
        <Ic s={20}><path d="M6.500 4H3v14h7M7 2h5v3.500H7zM12.500 4H16v4" /><path d="M12 11h1M15 11h4M12 14h1M15 14h4M12 17h1M15 17h4" stroke={BL} /></Ic>
      </div>
      <Hr />
      <MRow icon={<Ic s={17}><circle cx="10" cy="10" r="8.500" /><path d="M6.500 15 10 5l3.500 10M7.500 12h5" /></Ic>} t="字体(F)..." key2="Ctrl+D" cls="mt-[1px]" />
      <MRow icon={<Ic s={17}><path d="M3 3h14M3 8h14M3 13h6M3 18h5" /><path d="M11 13h7M14 13v6M17 13v6M14 13a3 3 0 0 0 0 3" stroke={BL} /></Ic>} t="段落(P)..." />
      <MRow icon={<Bullets s={15} />} t="项目符号和编号(N)..." />
      <div className="mt-[2px]"><Hr /></div>
      <MRow icon={<Brush s={17} />} t="格式刷(F)" cls="mt-[2px]" vsep={<Ic s={17}><path d="M8 2h3v7H8zM12 4h3v5h-3zM3 9h14v9H3zM3 13h14" /></Ic>} />
      <div className="mt-[2px]"><Hr /></div>
      <MRow icon={<Ic s={17}><path d="M9 5 6.500 3A3.500 3.500 0 0 0 2 8l4 4a3.500 3.500 0 0 0 5-.5M11 15l2.500 2a3.500 3.500 0 0 0 4.500-5l-4-4a3.500 3.500 0 0 0-5 .5" /></Ic>} t="超链接(H)..." key2="Ctrl+K" cls="mt-[1px]" />
      <MRow icon={<Ic s={17}><path d="M10 15H5l-3 3V3h16v8" /><path d="M15 13v6M12 16h6" stroke="#17805a" /></Ic>} t="插入批注(M)" cls="mt-[1px]" />
      <div className="mt-[3px]"><Hr /></div>
      <MRow icon={<Ic s={17}><path d="M11 2 14 7 17 2M14 7v5M3 10c0-4 2-6 5-6M17 11c0 4-2 6-5 6M3 13l3 6M9 13l-6 6M2 13h8" /></Ic>} t="翻译(T)" vsep={<ChevronRight size={15} strokeWidth={1} color="#777" />} />
    </div>
  );
}

function Arrow() {
  return (
    <svg className="absolute left-[770px] top-[510px] z-20 drop-shadow-[1px_2px_1px_rgba(0,0,0,0.3)]" width="92" height="60" viewBox="0 0 92 60">
      <path d="M5 5 33 8 27 15 87 53 85 56 24 18 18 26z" fill="#e8141c" />
    </svg>
  );
}

function Watermark() {
  return (
    <div className="absolute left-[895px] top-[836px] w-[673px] h-[162px] bg-[rgba(255,255,255,0.6)] overflow-hidden z-20 flex">
      <div className="w-[393px] pl-[15px] relative">
        <div className="text-[71px] leading-[72px] font-bold text-[#f8262c] pt-[8px] whitespace-nowrap font-['Noto_Sans_CJK_SC']">电脑技术网</div>
        <div className="text-[56.500px] leading-[60px] text-[#2a7ae8] font-['Liberation_Serif'] -ml-[1px] pt-[14px] whitespace-nowrap tracking-[-0.800px]">www.tagxp.com</div>
      </div>
      <div className="w-[269px] h-[178px] bg-[#2b7bfa] rounded-[46px] flex items-center justify-center text-[132px] font-semibold text-[#f8f6f5] font-['Open_Sans'] leading-none pb-[14px] tracking-[-3px]">TAG</div>
    </div>
  );
}

function XzLogo() {
  return (
    <div className="absolute left-[1760px] top-[985px] w-[160px] h-[50px] z-30 flex">
      <svg width="44" height="46" viewBox="0 0 44 46" fill="none" className="mt-[3px]">
        <path d="M38 4C24 4 8 14 5 26c-2 9 6 14 14 11 6-2 9-8 6-12-3-3-9-1-9 3" stroke="#3f9be0" strokeWidth="3.500" />
        <path d="M34 10C22 12 12 20 11 28" stroke="#8fc654" strokeWidth="2.500" />
        <path d="M10 38c8 4 18 2 24-4" stroke="#2c7cc8" strokeWidth="3" />
      </svg>
      <div className="ml-[1px] pt-[5px]">
        <div className="text-[21px] leading-[24px] font-bold text-[#2c7cc8] [text-shadow:0_0_2px_#fff,0_0_2px_#fff] whitespace-nowrap">极光下载站</div>
        <div className="text-[14px] leading-[16px] mt-[4px] text-[#3f9f3a] font-['Liberation_Serif'] font-bold tracking-[0.5px] [text-shadow:0_0_2px_#fff,0_0_2px_#fff] whitespace-nowrap">www.xz7.com</div>
      </div>
    </div>
  );
}

export default function App() {
  return (
    <div className="w-[1920px] h-[1040px] relative overflow-hidden flex flex-col bg-gradient-to-b from-[#ebe4dc] to-[#ede5e1] font-['Noto_Sans_CJK_SC','Noto_Sans',sans-serif]">
      <TabBar />
      <MenuBar />
      <Ribbon />
      <div className="flex-1 flex min-h-0 mt-[1px]">
        <Doc />
        <ScrollCol />
        <Panel />
        <SideBar />
      </div>
      <StatusBar />
      <FloatBar />
      <ContextMenu />
      <Arrow />
      <Watermark />
      <XzLogo />
    </div>
  );
}
